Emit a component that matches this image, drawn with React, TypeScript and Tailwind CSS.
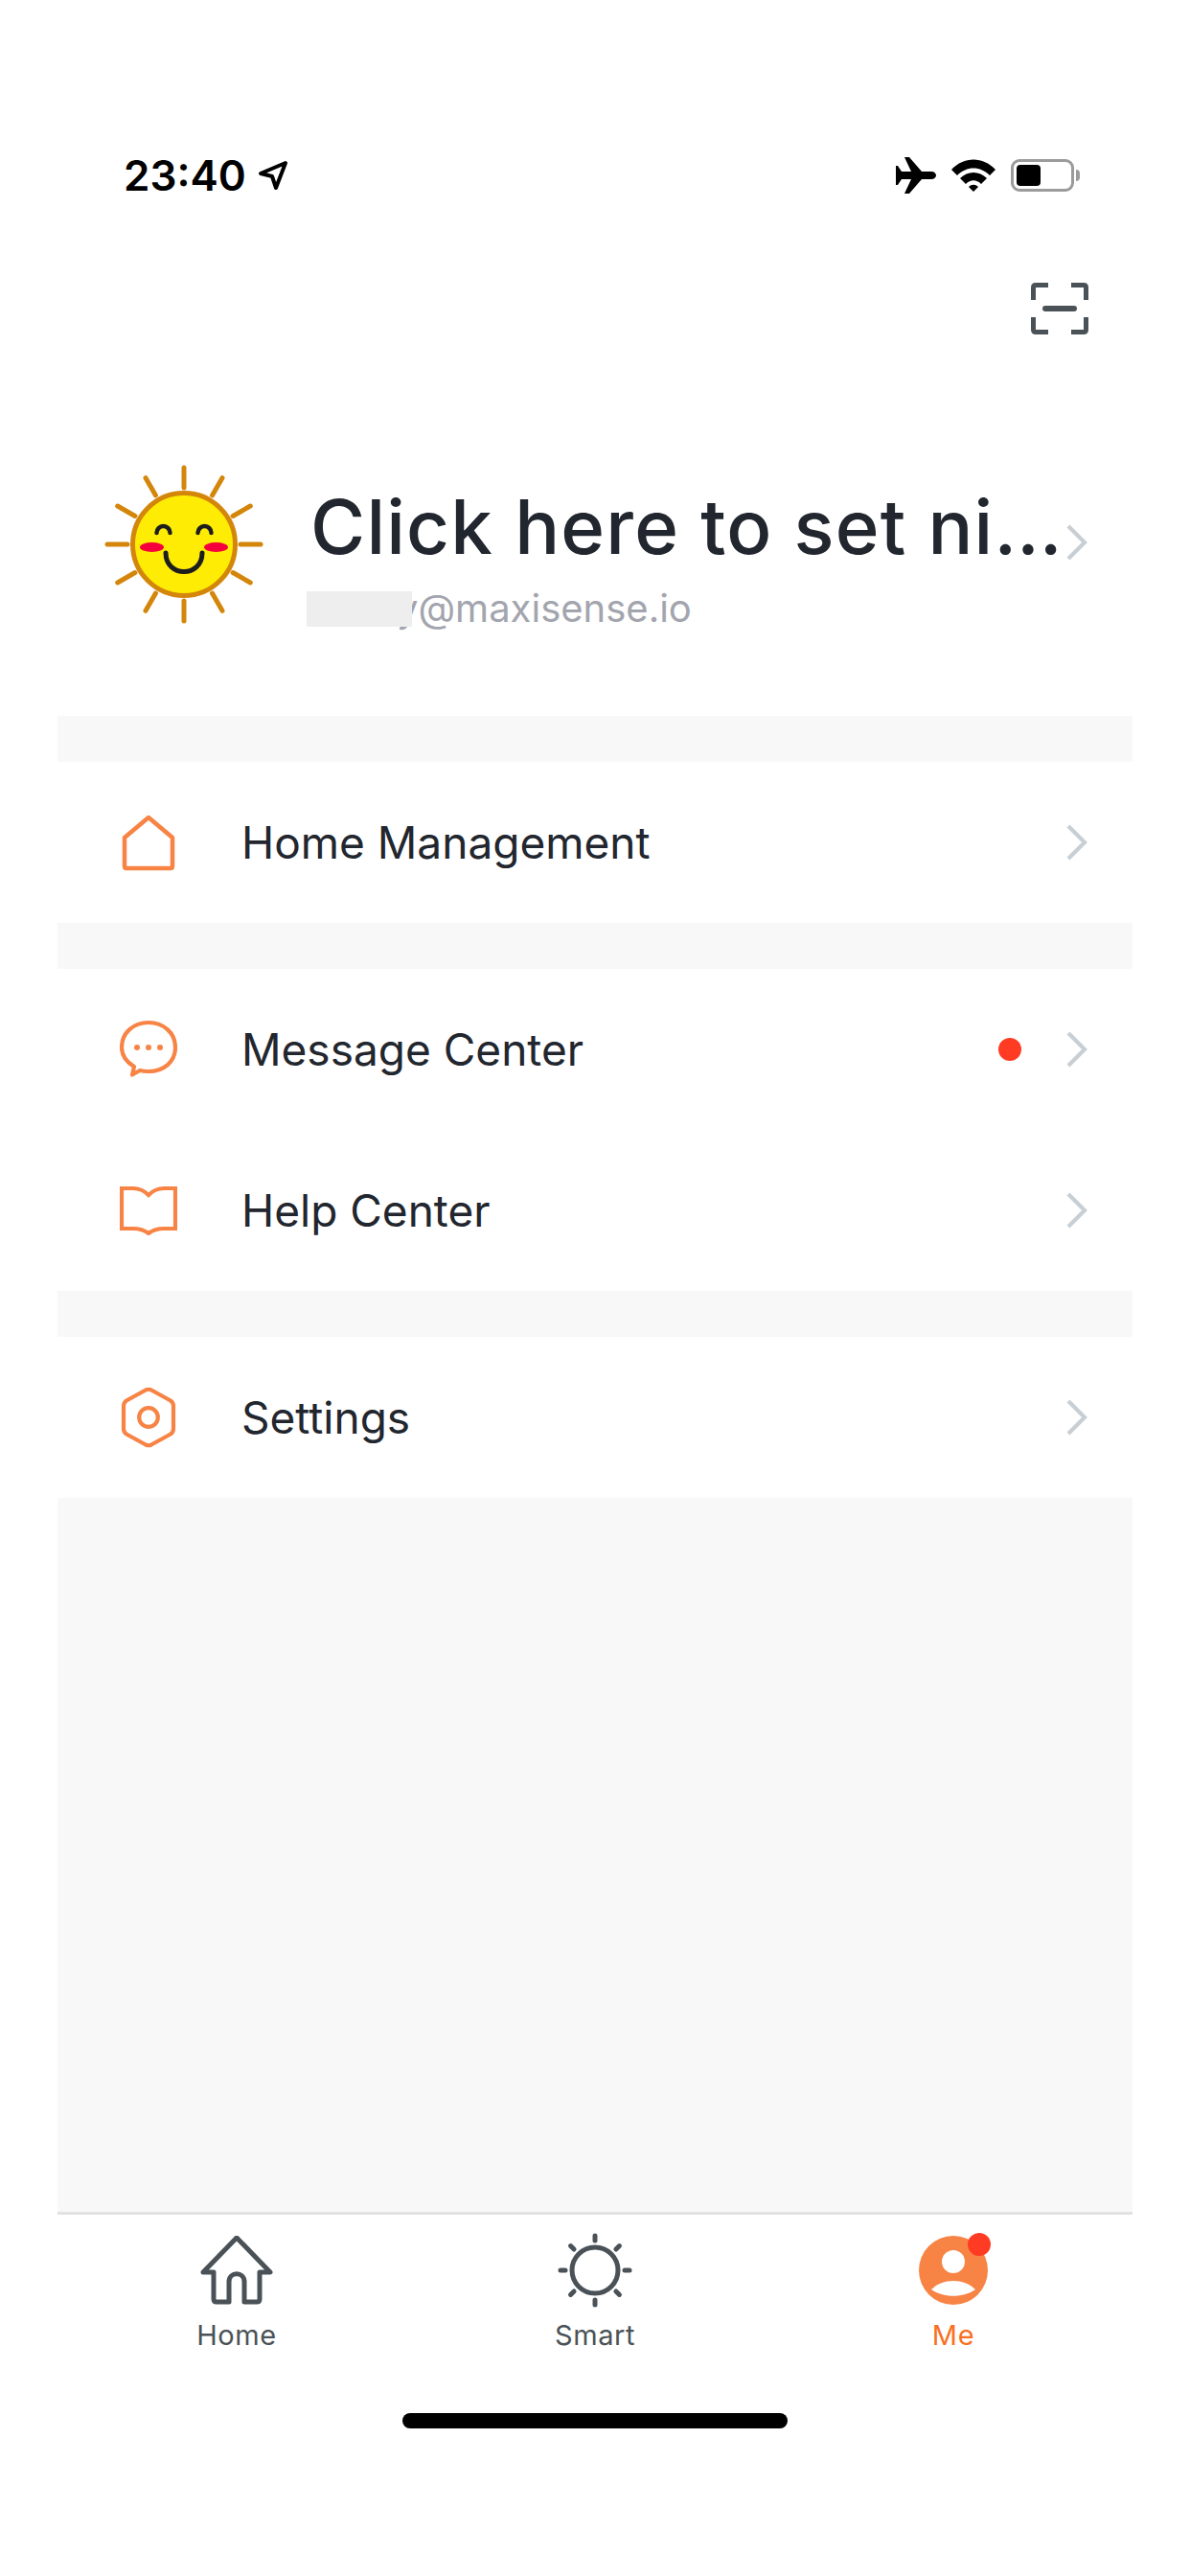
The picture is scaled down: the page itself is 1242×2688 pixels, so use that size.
const font = { fontFamily: 'Inter, "Liberation Sans", sans-serif' };

function Chevron() {
  return (
    <svg width="26" height="38" viewBox="0 0 26 38" className="shrink-0">
      <path d="M3 2 L20 19 L3 36" fill="none" stroke="#c8cfd4" strokeWidth="4.2" />
    </svg>
  );
}

function Sun() {
  const rays = [0, 30, 60, 90, 120, 150, 180, 210, 240, 270, 300, 330];
  return (
    <svg width="170" height="170" viewBox="0 0 170 170" className="shrink-0">
      {rays.map((a) => (
        <line key={a} x1="85" y1="5" x2="85" y2="26" stroke="#d4860b" strokeWidth="5" strokeLinecap="round" transform={`rotate(${a} 85 85)`} />
      ))}
      <circle cx="85" cy="85" r="53.5" fill="#ffec05" stroke="#d4860b" strokeWidth="5" />
      <path d="M56.5 73 a7 7 0 0 1 14 0 M99.500 73 a7 7 0 0 1 14 0" fill="none" stroke="#1d1d1d" strokeWidth="4.5" strokeLinecap="round" />
      <ellipse cx="51.5" cy="88" rx="12.5" ry="5" fill="#f5003c" />
      <ellipse cx="118.5" cy="88" rx="12.5" ry="5" fill="#f5003c" />
      <path d="M66 94 C66 120 104 120 104 94" fill="none" stroke="#1d1d1d" strokeWidth="5" strokeLinecap="round" />
    </svg>
  );
}

function HomeOutline() {
  return (
    <svg width="60" height="60" viewBox="0 0 60 60">
      <path d="M5 24 L30 3 L55 24 V54 Q55 56 53 56 H7 Q5 56 5 54 Z" fill="none" stroke="#f78345" strokeWidth="4.5" strokeLinejoin="round" transform="translate(0 1)" />
    </svg>
  );
}

function Message() {
  return (
    <svg width="60" height="62" viewBox="0 0 60 62">
      <path d="M15 49 C7 44 2 37 2 29 C2 14 14 3 30 3 C46 3 58 14 58 29 C58 44 46 54 30 54 C26 54 23 53.500 21 53 L13 57.500 L15 49 Z" fill="none" stroke="#f78345" strokeWidth="4.2" strokeLinejoin="round" />
      <circle cx="18" cy="29" r="3" fill="#f78345" />
      <circle cx="30" cy="29" r="3" fill="#f78345" />
      <circle cx="42" cy="29" r="3" fill="#f78345" />
    </svg>
  );
}

function Book() {
  return (
    <svg width="60" height="52" viewBox="0 0 60 52">
      <path d="M2 3 H14 C21 3 26 6 30 10 C34 6 39 3 46 3 H58 V45 H46 C39 45 34 47 30 50 C26 47 21 45 14 45 H2 Z" fill="none" stroke="#f78345" strokeWidth="4.2" />
    </svg>
  );
}

function Hex() {
  return (
    <svg width="60" height="66" viewBox="0 0 60 66">
      <path d="M27 4.500 Q30 3 33 4.500 L53 15.500 Q56 17.500 56 21 V45 Q56 48.500 53 50.500 L33 61.500 Q30 63 27 61.500 L7 50.500 Q4 48.500 4 45 V21 Q4 17.500 7 15.500 Z" fill="none" stroke="#f78345" strokeWidth="4.2" strokeLinejoin="round" />
      <circle cx="30" cy="33" r="9.800" fill="none" stroke="#f78345" strokeWidth="4.2" />
    </svg>
  );
}

function Row({ icon, label, dot }: { icon: React.ReactNode; label: string; dot?: boolean }) {
  return (
    <div className="flex h-[168px] items-center pl-[65px] pr-[44px]">
      <div className="flex w-[60px] shrink-0 justify-center">{icon}</div>
      <div className="ml-[67px] flex-1 text-[46px] leading-none text-[#22262e]">{label}</div>
      {dot && <div className="mr-[46px] h-6 w-6 rounded-full bg-[#ff3b24]" />}
      <Chevron />
    </div>
  );
}

function Tab({ label, active, children }: { label: string; active?: boolean; children: React.ReactNode }) {
  return (
    <div className="flex w-[375px] flex-col items-center">
      <div className="flex h-[84px] items-center justify-center">{children}</div>
      <div className={`mt-[7px] text-[29px] leading-[38px] tracking-[0.6px] ${active ? 'text-[#f9701f]' : 'text-[#4a5257]'}`}>{label}</div>
    </div>
  );
}

export default function App() {
  return (
    <div className="flex h-[2688px] w-[1242px] flex-col overflow-hidden bg-white" style={font}>
      {/* status bar */}
      <div className="flex items-center justify-between pl-[129px] pr-[115px] pt-[161px]">
        <div className="flex items-center">
          <span className="text-[44px] font-semibold leading-[44px] text-black">23:40</span>
          <svg width="32" height="32" viewBox="0 0 32 32" className="ml-[12px]">
            <path d="M29 3 L3 14 L15 17 L19 29 Z" fill="none" stroke="#000" strokeWidth="4" strokeLinejoin="round" />
          </svg>
        </div>
        <div className="flex items-center gap-[16px]">
          <svg width="42" height="38" viewBox="0 0 42 38">
            <path d="M9 0 H14 L27 15 H37 C40 15 42 17 42 19 C42 21 40 23 37 23 H27 L14 38 H9 L16 23 H6 L2 29 H0 V9 H2 L6 15 H16 Z" fill="#000" />
          </svg>
          <svg width="46" height="34" viewBox="0 0 46 34">
            <path d="M0 11 C13 -3 33 -3 46 11 L40 17 C30 7 16 7 6 17 Z M9 20 C17 12 29 12 37 20 L31 26 C26 21 20 21 15 26 Z M18 29 C21 26 25 26 28 29 L23 34 Z" fill="#000" />
          </svg>
          <div className="flex items-center">
            <div className="flex h-[34px] w-[66px] items-center rounded-[9px] border-[3px] border-[#9b9b9b] pl-[3px]">
              <div className="h-[22px] w-[25px] rounded-[4px] bg-black" />
            </div>
            <div className="ml-[2px] h-[12px] w-[4px] rounded-r-full bg-[#9b9b9b]" />
          </div>
        </div>
      </div>

      {/* scan */}
      <div className="flex justify-end pr-[106px] pt-[90px]">
        <svg width="60" height="54" viewBox="0 0 60 54">
          <path d="M18 2.500 H5 Q2.500 2.500 2.500 5 V18 M42 2.500 H55 Q57.500 2.500 57.500 5 V18 M18 51.500 H5 Q2.500 51.500 2.500 49 V36 M42 51.500 H55 Q57.500 51.500 57.500 49 V36" fill="none" stroke="#4a5257" strokeWidth="5" />
          <path d="M15 27 H45" stroke="#4a5257" strokeWidth="6" strokeLinecap="round" />
        </svg>
      </div>

      <div className="mx-[60px] flex flex-1 flex-col">
        {/* profile */}
        <div className="flex h-[398px] items-center pl-[47px] pr-[44px]">
          <div className="mt-[40px] shrink-0"><Sun /></div>
          <div className="ml-[47px] mt-[66px] flex min-w-0 flex-1 flex-col">
            <div className="overflow-hidden whitespace-nowrap text-[78px] font-[550] leading-[94px] tracking-[1.2px] text-[#22262e]">Click here to set ni…</div>
            <div className="mt-[14px] -ml-[4px] flex items-center text-[40px] leading-[48px] text-[#a3a5ae]">
              <div className="relative z-10 h-[37px] w-[110px] shrink-0 bg-[#eeeeee]" />
              <span className="-ml-[16px]">y@maxisense.io</span>
            </div>
          </div>
          <div className="mt-[36px]"><Chevron /></div>
        </div>

        <div className="h-[48px] bg-[#f8f8f8]" />
        <Row icon={<HomeOutline />} label="Home Management" />
        <div className="h-[48px] bg-[#f8f8f8]" />
        <Row icon={<Message />} label="Message Center" dot />
        <Row icon={<Book />} label="Help Center" />
        <div className="h-[48px] bg-[#f8f8f8]" />
        <Row icon={<Hex />} label="Settings" />
        <div className="flex-1 border-b-[3px] border-[#e2e2e2] bg-[#f8f8f8]" />

        {/* tabs */}
        <div className="flex h-[207px] pt-[16px]">
          <Tab label="Home">
            <svg width="76" height="72" viewBox="0 0 76 72">
              <path d="M38 2 L73 38 H62 V66 Q62 69 59 69 H46 V48 C46 37 30 37 30 48 V69 H17 Q14 69 14 66 V38 H3 Z" fill="none" stroke="#4a5257" strokeWidth="5" strokeLinejoin="round" />
            </svg>
          </Tab>
          <Tab label="Smart">
            <svg width="78" height="78" viewBox="0 0 78 78">
              <circle cx="39" cy="39" r="24" fill="none" stroke="#4a5257" strokeWidth="5" />
              {[0, 45, 90, 135, 180, 225, 270, 315].map((a) => (
                <line key={a} x1="39" y1="3" x2="39" y2="8" stroke="#4a5257" strokeWidth="5" strokeLinecap="round" transform={`rotate(${a} 39 39)`} />
              ))}
            </svg>
          </Tab>
          <Tab label="Me" active>
            <div className="relative">
              <svg width="72" height="72" viewBox="0 0 72 72">
                <circle cx="36" cy="36" r="36" fill="#f78345" />
                <circle cx="36" cy="27" r="12" fill="#fff" />
                <path d="M13 56 C25 44 47 44 59 56 C47 65 25 65 13 56 Z" fill="#fff" />
              </svg>
              <div className="absolute -right-[3px] -top-[3px] h-6 w-6 rounded-full bg-[#ff3b24]" />
            </div>
          </Tab>
        </div>
      </div>

      {/* home indicator */}
      <div className="flex justify-center pb-[154px]">
        <div className="h-4 w-[402px] rounded-full bg-black" />
      </div>
    </div>
  );
}
